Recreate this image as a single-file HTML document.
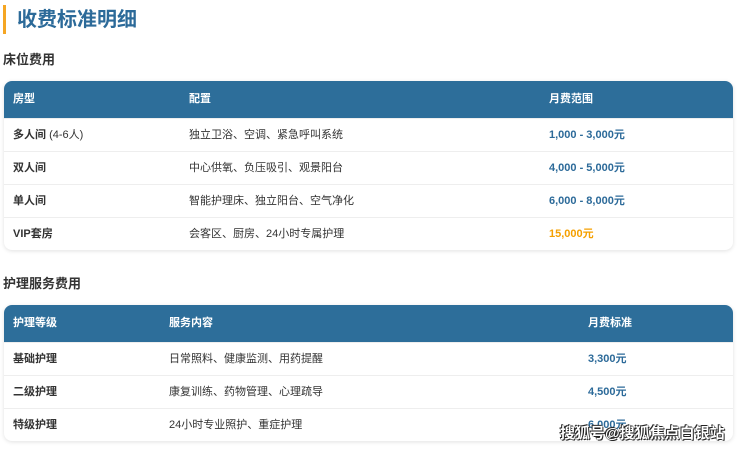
<!DOCTYPE html>
<html><head><meta charset="utf-8"><style>
body{margin:0;width:740px;height:450px;background:#fff;font-family:"Liberation Sans","Noto Sans CJK SC",sans-serif;position:relative;overflow:hidden;color:#333}
.bar{position:absolute;left:3px;top:5px;width:3px;height:29px;background:#f5a623}
.title{position:absolute;left:17px;top:6px;font-size:20px;font-weight:bold;color:#2c6a99;line-height:28px}
.sec{position:absolute;left:3px;font-size:13px;font-weight:bold;color:#333}
.tbl{position:absolute;left:4px;width:729px;border-radius:8px;overflow:hidden;box-shadow:0 1px 4px rgba(0,0,0,.12);background:#fff}
.hd{background:#2d6e9a;color:#fff;font-weight:bold;font-size:11px;height:37px;position:relative}
.row{height:32px;border-top:1px solid #eee;position:relative;font-size:11px}
.c{position:absolute;top:0;line-height:33px;white-space:nowrap}
.hd .c{line-height:37px}
.b{font-weight:bold}
.p{color:#2c6a99;font-weight:bold}
.o{color:#f5a000;font-weight:bold}
.wm{position:absolute;left:560px;top:422px;font-size:15px;color:#fff;font-weight:bold;text-shadow:0 0 1px #000,0 0 1px #000,1px 1px 0 #333,-1px -1px 0 #333}
</style></head><body>
<div class="bar"></div>
<div class="title">收费标准明细</div>
<div class="sec" style="top:49px">床位费用</div>
<div class="tbl" style="top:81px">
<div class="hd"><span class="c" style="left:9px">房型</span><span class="c" style="left:185px">配置</span><span class="c" style="left:545px">月费范围</span></div>
<div class="row"><span class="c b" style="left:9px">多人间 <span style="font-weight:normal">(4-6人)</span></span><span class="c" style="left:185px">独立卫浴、空调、紧急呼叫系统</span><span class="c p" style="left:545px">1,000 - 3,000元</span></div>
<div class="row"><span class="c b" style="left:9px">双人间</span><span class="c" style="left:185px">中心供氧、负压吸引、观景阳台</span><span class="c p" style="left:545px">4,000 - 5,000元</span></div>
<div class="row"><span class="c b" style="left:9px">单人间</span><span class="c" style="left:185px">智能护理床、独立阳台、空气净化</span><span class="c p" style="left:545px">6,000 - 8,000元</span></div>
<div class="row"><span class="c b" style="left:9px">VIP套房</span><span class="c" style="left:185px">会客区、厨房、24小时专属护理</span><span class="c o" style="left:545px">15,000元</span></div>
</div>
<div class="sec" style="top:273px">护理服务费用</div>
<div class="tbl" style="top:305px">
<div class="hd"><span class="c" style="left:9px">护理等级</span><span class="c" style="left:165px">服务内容</span><span class="c" style="left:584px">月费标准</span></div>
<div class="row"><span class="c b" style="left:9px">基础护理</span><span class="c" style="left:165px">日常照料、健康监测、用药提醒</span><span class="c p" style="left:584px">3,300元</span></div>
<div class="row"><span class="c b" style="left:9px">二级护理</span><span class="c" style="left:165px">康复训练、药物管理、心理疏导</span><span class="c p" style="left:584px">4,500元</span></div>
<div class="row"><span class="c b" style="left:9px">特级护理</span><span class="c" style="left:165px">24小时专业照护、重症护理</span><span class="c p" style="left:584px">6,000元</span></div>
</div>
<div class="wm">搜狐号@搜狐焦点白银站</div>
</body></html>
